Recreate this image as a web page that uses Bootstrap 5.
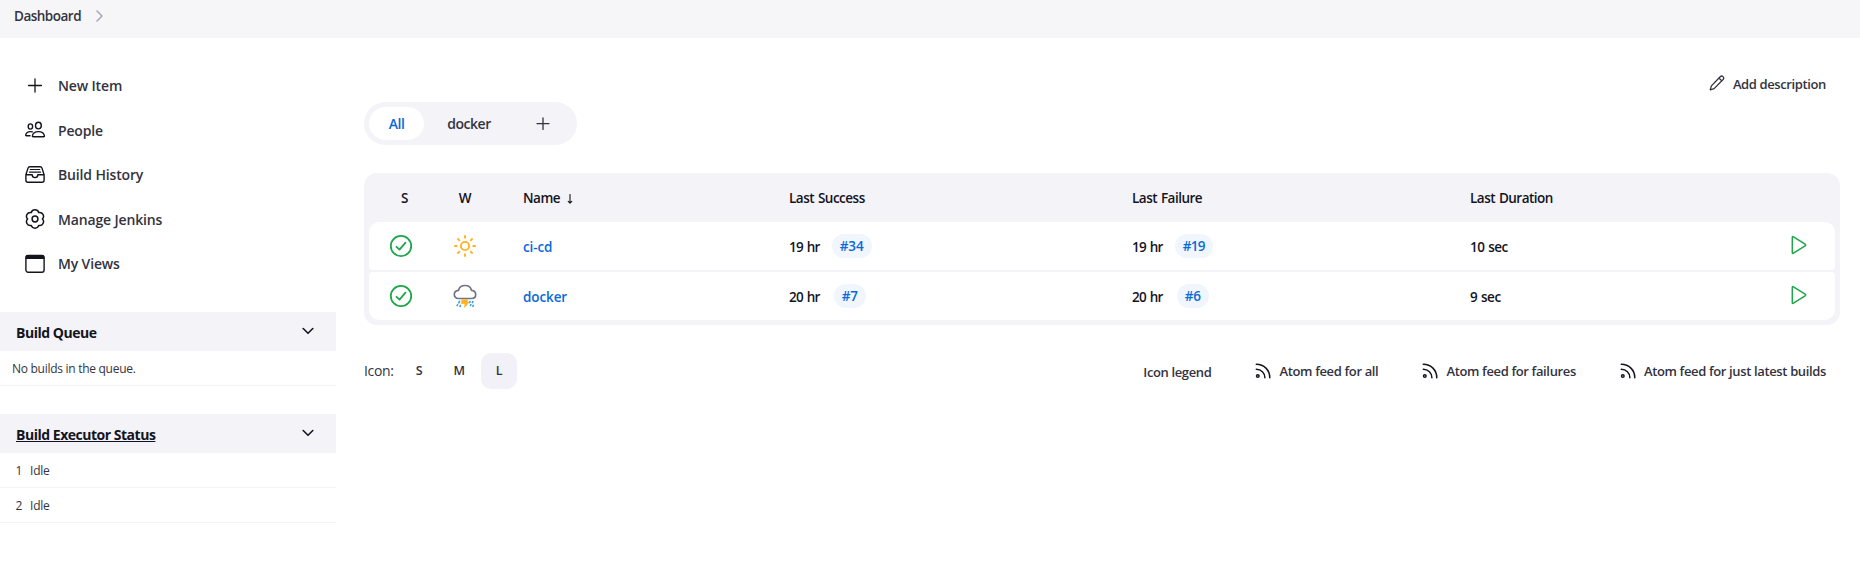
<!DOCTYPE html>
<html lang="en">
<head>
<meta charset="utf-8">
<meta name="viewport" content="width=device-width, initial-scale=1">
<title>Dashboard [Jenkins]</title>
<link href="https://cdn.jsdelivr.net/npm/bootstrap@5.3.0/dist/css/bootstrap.min.css" rel="stylesheet">
<style>
:root{--ink:#333340;--panel:#f3f3f8;--blue:#0b6ad8;--green:#1ea64b}
body{font-family:"Open Sans","Noto Sans",sans-serif;font-size:14px;line-height:20px;color:var(--ink);background:#fff;overflow:hidden;font-weight:600}
a{color:inherit;text-decoration:none}
svg{display:block;flex:none;fill:none;stroke:currentColor;stroke-linecap:round;stroke-linejoin:round}
.crumbs{height:38px;background:#f6f6f8;padding:0 0 6px 14px;gap:15px}
.crumbs a{font-size:13.5px;letter-spacing:-.5px}
.crumbs svg{color:#a9a9b8;margin-bottom:1px}
.side{width:336px}
.tasks{padding-top:25.5px;height:274px}
.task-link{height:44.5px;padding-left:25px;gap:13px;letter-spacing:-.15px}
.task-link svg{color:#14141f}
.task-link span{padding-top:1px}
.pane-head{height:39px;background:var(--panel);color:#14141f;font-weight:700;padding:2px 22px 0 16px;letter-spacing:-.48px}
.pane-head svg{margin-bottom:4px}
.pane-row{height:35px;border-bottom:1px solid #f3f3f5;font-weight:400;font-size:12px;padding:1px 0 0 12px;letter-spacing:-.28px}
.exec{padding-left:15.5px;gap:8px}
.main-area{width:1476px;margin-left:28px}
.topline{height:64px;padding:37px 14px 0 0;font-size:13px;letter-spacing:-.38px}
.tabs{height:43px;width:213px;background:var(--panel);padding:5px;border-radius:22px;letter-spacing:-.5px}
.tabs a{height:33px;border-radius:17px}
.tab-on{width:55px;background:#fff;color:var(--blue)}
.jobs{margin-top:28px;height:152px;background:var(--panel);border-radius:13px;padding:0 5px 5px}
.jobs .table{--bs-table-bg:transparent;border-collapse:separate;border-spacing:0 2px;table-layout:fixed;color:#14141f;font-size:13.5px}
.jobs td,.jobs th{padding:2px 0 0 26px;font-weight:600;letter-spacing:-.5px;word-spacing:.8px}
.jobs th{height:45px;color:#14141f;vertical-align:middle;padding-top:0}
.jobs td{height:48px;background:#fff}
.jobs .ico{padding:0;text-align:center}
.jobs .ico svg{margin:0 auto}
.jobs .run-icon{position:relative;top:-1px}
.ok,.run-icon{color:var(--green)}
.sun{color:#ffb320}
.cloud{color:#737388}
.jobs tbody td:first-child{border-radius:4px 0 0 4px}
.jobs tbody td:last-child{border-radius:0 4px 4px 0}
.jobs tbody tr:first-child td:first-child{border-top-left-radius:10px}
.jobs tbody tr:first-child td:last-child{border-top-right-radius:10px}
.jobs tbody tr:last-child td:first-child{border-bottom-left-radius:10px}
.jobs tbody tr:last-child td:last-child{border-bottom-right-radius:10px}
.job-link{color:var(--blue);letter-spacing:-.1px}
.ago{letter-spacing:-.7px}
.build{height:24px;border-radius:12px;background:#f1f6fc;color:var(--blue);padding:2px 8px 0;margin-bottom:2px;letter-spacing:-.1px}
.foot{margin-top:28px;height:36px;padding-right:14px;font-size:13px;letter-spacing:-.36px}
.size-link{width:36px;height:36px;border-radius:10px;margin-right:4px;font-size:12.5px}
.feed{gap:8px;margin-left:44px}
.feed svg{color:#14141f}
</style>
</head>
<body>
<header class="crumbs d-flex align-items-center">
  <a href="#">Dashboard</a>
  <svg width="7" height="12" viewBox="0 0 7 12" stroke-width="1.6"><path d="M1 1l5 5-5 5"/></svg>
</header>
<div class="d-flex">
  <aside class="side">
    <nav class="tasks d-flex flex-column">
      <a href="#" class="task-link d-flex align-items-center"><svg width="20" height="20" viewBox="0 0 20 20" stroke-width="1.3"><path d="M10 3v13M3.5 9.5h13"/></svg><span>New Item</span></a>
      <a href="#" class="task-link d-flex align-items-center"><svg width="20" height="20" viewBox="0 0 20 20" stroke-width="1.4"><ellipse cx="13.4" cy="5.6" rx="2.9" ry="3.3"/><ellipse cx="5.4" cy="6.5" rx="2.2" ry="2.6"/><path d="M13.4 11.6c-3.2 0-5.6 1.8-6 4.3-.1.5.2.8.7.8h10.6c.5 0 .8-.3.7-.8-.4-2.5-2.8-4.3-6-4.3zM7.4 11.9c-.6-.2-1.3-.3-2-.3-2.4 0-4.3 1.3-4.7 3.4-.1.4.2.7.6.7H5"/></svg><span>People</span></a>
      <a href="#" class="task-link d-flex align-items-center"><svg width="20" height="20" viewBox="0 0 20 20" stroke-width="1.4"><path d="M.9 9.800L3 3.100C3.300 2.200 4 1.700 4.800 1.700h10.400c.8 0 1.500.5 1.800 1.400l2.100 6.700v5.400c0 1.100-.9 2-2 2H2.900c-1.100 0-2-.9-2-2V9.800h6.300c0 1.500 1.300 2.800 2.800 2.800s2.800-1.300 2.800-2.800h6.300"/><path d="M5.300 4.500h9.400M4.500 7.100h11" stroke-width="1.200"/></svg><span>Build History</span></a>
      <a href="#" class="task-link d-flex align-items-center"><svg width="20" height="20" viewBox="0 0 20 20" stroke-width="1.5"><circle cx="10" cy="10" r="2.9"/><path d="M17.400 10A3.850 3.850 0 0 1 13.700 16.410A3.850 3.850 0 0 1 6.300 16.410A3.850 3.850 0 0 1 2.600 10A3.850 3.850 0 0 1 6.300 3.590A3.850 3.850 0 0 1 13.700 3.590A3.850 3.850 0 0 1 17.400 10z"/></svg><span>Manage Jenkins</span></a>
      <a href="#" class="task-link d-flex align-items-center"><svg width="20" height="20" viewBox="0 0 20 20" stroke-width="1.4"><rect x=".9" y="1.5" width="18.2" height="16.7" rx="2.2"/><path d="M1.200 4.400V3.500q0-1.700 1.700-1.700h14.200q1.700 0 1.700 1.700v.9z" fill="currentColor"/></svg><span>My Views</span></a>
    </nav>
    <section>
      <div class="pane-head d-flex align-items-center justify-content-between"><span>Build Queue</span><svg width="12" height="8" viewBox="0 0 12 8" stroke-width="1.6"><path d="M1.200 1.500L6 6.300l4.800-4.800"/></svg></div>
      <div class="pane-row d-flex align-items-center"><span>No builds in the queue.</span></div>
    </section>
    <section style="margin-top:28px">
      <div class="pane-head d-flex align-items-center justify-content-between"><a href="#" class="text-decoration-underline">Build Executor Status</a><svg width="12" height="8" viewBox="0 0 12 8" stroke-width="1.6"><path d="M1.200 1.500L6 6.300l4.800-4.800"/></svg></div>
      <div class="pane-row exec d-flex align-items-center"><span>1</span><span>Idle</span></div>
      <div class="pane-row exec d-flex align-items-center"><span>2</span><span>Idle</span></div>
    </section>
  </aside>
  <main class="main-area">
    <div class="topline d-flex justify-content-end align-items-start">
      <a href="#" class="d-flex gap-2"><svg width="16" height="16" viewBox="0 0 16 16" stroke-width="1.3"><path d="M11.200 1.700c.9-.9 2.100-.8 2.800-.1.800.8.9 2 .1 2.900l-9 9.100-3.900 1.300 1.200-4zM9.900 3l2.900 2.900"/></svg><span style="margin-top:-1px">Add description</span></a>
    </div>
    <nav class="tabs d-flex align-items-center">
      <a href="#" class="tab-on d-flex align-items-center justify-content-center"><span>All</span></a>
      <a href="#" class="d-flex align-items-center justify-content-center" style="width:90px"><span>docker</span></a>
      <a href="#" class="d-flex align-items-center justify-content-center" style="width:58px"><svg width="14" height="14" viewBox="0 0 14 14" stroke-width="1.3"><path d="M7 .9v11.500M1 6.600h12"/></svg></a>
    </nav>
    <div class="jobs">
      <table class="table table-borderless align-middle mb-0">
        <colgroup><col style="width:64px"><col style="width:64px"><col style="width:266px"><col style="width:343px"><col style="width:338px"><col style="width:318px"><col style="width:73px"></colgroup>
        <thead><tr><th class="ico" style="padding-left:7px">S</th><th class="ico">W</th><th><span>Name</span><svg class="d-inline-block" style="margin-left:7px" width="6" height="10" viewBox="0 0 6 10" stroke-width="1.1"><path d="M3 .5v8.500M1.200 7.300L3 9.200l1.800-1.900"/></svg></th><th><span>Last Success</span></th><th><span>Last Failure</span></th><th><span>Last Duration</span></th><th></th></tr></thead>
        <tbody>
          <tr>
            <td class="ico"><svg class="ok" width="24" height="24" viewBox="0 0 24 24" stroke-width="1.8"><circle cx="12" cy="12" r="10.2"/><path d="M7.500 12.800l3 2.800 6-7"/></svg></td>
            <td class="ico"><svg class="sun" width="24" height="24" viewBox="0 0 24 24" stroke-width="1.9"><circle cx="12" cy="12" r="4.1"/><path stroke-linecap="butt" d="M12 1.200v3.300M12 19.500v3.300M1.200 12h3.300M19.500 12h3.300M4.400 4.400l2.400 2.400M17.200 17.200l2.400 2.400M4.400 19.600l2.400-2.400M17.200 6.800l2.400-2.400"/></svg></td>
            <td><a href="#" class="job-link">ci-cd</a></td>
            <td><div class="d-flex align-items-center"><span class="ago">19 hr</span><a href="#" class="build" style="margin-left:12px">#34</a></div></td>
            <td><div class="d-flex align-items-center"><span class="ago">19 hr</span><a href="#" class="build" style="margin-left:12px;letter-spacing:-.7px">#19</a></div></td>
            <td><span>10 sec</span></td>
            <td class="ico"><svg class="run-icon" width="18" height="20" viewBox="0 0 18 20" stroke-width="1.5"><path d="M2.300 2.500v15q0 1.400 1.200.7l11.600-7.400q1.200-.8 0-1.600L3.500 1.800Q2.300 1.100 2.300 2.500z"/></svg></td>
          </tr>
          <tr>
            <td class="ico"><svg class="ok" width="24" height="24" viewBox="0 0 24 24" stroke-width="1.8"><circle cx="12" cy="12" r="10.2"/><path d="M7.500 12.800l3 2.800 6-7"/></svg></td>
            <td class="ico"><svg class="cloud" width="24" height="24" viewBox="0 0 24 24" stroke-width="1.7"><path d="M5.500 14.500C3 14.500 1.300 12.800 1.300 10.500S3 6.500 5.500 6.300C6.300 3.200 8.900 1.500 12 1.500s5.700 1.700 6.500 4.800c2.500.2 4.200 1.900 4.200 4.200s-1.700 4-4.200 4z"/><path fill="#ffb320" stroke="#ffb320" stroke-width=".8" d="M9.300 15.800h5.400l-.8 2.500h2l-4.200 5 .3-3.700H8.700z"/><path stroke="#2aa2dd" stroke-width="1.6" d="M6.500 17.300l-.7 1.500M4.500 20.800l-.3.700M7.400 21.500l-.4.900M17 17.600l-.4.900M19.900 17.600l-.5 1M17.900 20.600l-.4.800M20.300 21.500l-.4.800"/></svg></td>
            <td><a href="#" class="job-link">docker</a></td>
            <td><div class="d-flex align-items-center"><span class="ago">20 hr</span><a href="#" class="build" style="margin-left:14px">#7</a></div></td>
            <td><div class="d-flex align-items-center"><span class="ago">20 hr</span><a href="#" class="build" style="margin-left:14px">#6</a></div></td>
            <td><span>9 sec</span></td>
            <td class="ico"><svg class="run-icon" width="18" height="20" viewBox="0 0 18 20" stroke-width="1.5"><path d="M2.300 2.500v15q0 1.400 1.200.7l11.600-7.400q1.200-.8 0-1.600L3.500 1.800Q2.300 1.100 2.300 2.500z"/></svg></td>
          </tr>
        </tbody>
      </table>
    </div>
    <div class="foot d-flex align-items-center">
      <span class="fw-normal" style="width:37px;font-size:14px">Icon:</span>
      <a href="#" class="size-link d-flex align-items-center justify-content-center">S</a>
      <a href="#" class="size-link d-flex align-items-center justify-content-center">M</a>
      <a href="#" class="size-link d-flex align-items-center justify-content-center" style="background:#f1f1f7">L</a>
      <div class="ms-auto d-flex align-items-center">
        <a href="#" style="padding-top:1px">Icon legend</a>
        <a href="#" class="feed d-flex align-items-center"><svg width="16" height="16" viewBox="0 0 16 16" stroke-width="1.5"><circle cx="2.8" cy="13" r="1.3"/><path d="M1.300 1.200c7.700 0 13.500 5.900 13.500 13.500M1.300 6.300c4.900 0 8.600 3.700 8.600 8.400"/></svg><span>Atom feed for all</span></a>
        <a href="#" class="feed d-flex align-items-center"><svg width="16" height="16" viewBox="0 0 16 16" stroke-width="1.5"><circle cx="2.8" cy="13" r="1.3"/><path d="M1.300 1.200c7.700 0 13.500 5.900 13.500 13.500M1.300 6.300c4.900 0 8.600 3.700 8.600 8.400"/></svg><span>Atom feed for failures</span></a>
        <a href="#" class="feed d-flex align-items-center"><svg width="16" height="16" viewBox="0 0 16 16" stroke-width="1.5"><circle cx="2.8" cy="13" r="1.3"/><path d="M1.300 1.200c7.700 0 13.500 5.900 13.500 13.500M1.300 6.300c4.900 0 8.600 3.700 8.600 8.400"/></svg><span>Atom feed for just latest builds</span></a>
      </div>
    </div>
  </main>
</div>
<script src="https://cdn.jsdelivr.net/npm/bootstrap@5.3.0/dist/js/bootstrap.bundle.min.js"></script>
</body>
</html>
